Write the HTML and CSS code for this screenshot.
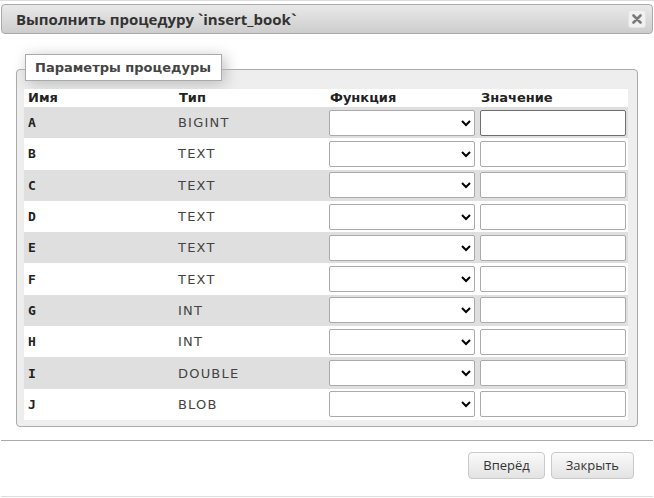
FILE: index.html
```html
<!DOCTYPE html>
<html lang="ru">
<head>
<meta charset="utf-8">
<title>Выполнить процедуру</title>
<link rel="stylesheet" href="styles.css">
</head>
<body>
<div class="dialog">
  <div class="titlebar">
    <span class="title">Выполнить процедуру `insert_book`</span>
    <button class="close" type="button" aria-label="Закрыть">
      <svg width="10" height="10" viewBox="0 0 10 10"><path d="M1.5 1.5 L8.5 8.5 M8.5 1.5 L1.5 8.5" stroke="#7a7a7a" stroke-width="2.6" stroke-linecap="round"/></svg>
    </button>
  </div>
  <div class="content">
    <div class="fieldset">
      <div class="legend">Параметры процедуры</div>
      <table class="params">
        <colgroup><col><col><col><col></colgroup>
        <thead>
          <tr><th>Имя</th><th>Тип</th><th>Функция</th><th>Значение</th></tr>
        </thead>
        <tbody>
          <tr class="odd"><td class="name">A</td><td class="type">BIGINT</td><td class="fn"><select><option></option></select></td><td class="val"><input type="text" class="focused"></td></tr>
          <tr><td class="name">B</td><td class="type">TEXT</td><td class="fn"><select><option></option></select></td><td class="val"><input type="text"></td></tr>
          <tr class="odd"><td class="name">C</td><td class="type">TEXT</td><td class="fn"><select><option></option></select></td><td class="val"><input type="text"></td></tr>
          <tr><td class="name">D</td><td class="type">TEXT</td><td class="fn"><select><option></option></select></td><td class="val"><input type="text"></td></tr>
          <tr class="odd"><td class="name">E</td><td class="type">TEXT</td><td class="fn"><select><option></option></select></td><td class="val"><input type="text"></td></tr>
          <tr><td class="name">F</td><td class="type">TEXT</td><td class="fn"><select><option></option></select></td><td class="val"><input type="text"></td></tr>
          <tr class="odd"><td class="name">G</td><td class="type">INT</td><td class="fn"><select><option></option></select></td><td class="val"><input type="text"></td></tr>
          <tr><td class="name">H</td><td class="type">INT</td><td class="fn"><select><option></option></select></td><td class="val"><input type="text"></td></tr>
          <tr class="odd"><td class="name">I</td><td class="type">DOUBLE</td><td class="fn"><select><option></option></select></td><td class="val"><input type="text"></td></tr>
          <tr><td class="name">J</td><td class="type">BLOB</td><td class="fn"><select><option></option></select></td><td class="val"><input type="text"></td></tr>
        </tbody>
      </table>
    </div>
  </div>
  <div class="buttonpane">
    <button class="btn" type="button">Вперёд</button>
    <button class="btn" type="button">Закрыть</button>
  </div>
</div>
</body>
</html>
```
FILE: styles.css
```css
* { box-sizing: border-box; }
html, body { margin: 0; padding: 0; background: #fff; }
body { font-family: "DejaVu Sans", sans-serif; color: #333; }

.dialog {
  width: 654px;
  height: 498px;
  border-top: 1px solid #dcdcdc;
  padding: 3px 1px 0;
  display: flex;
  flex-direction: column;
}

.titlebar {
  height: 30px;
  border: 1px solid #aaa;
  border-radius: 4px;
  background: linear-gradient(#e9e9e9, #cdcdcd);
  display: flex;
  align-items: center;
  justify-content: space-between;
  padding: 0 6px 0 14px;
}
.title {
  font-family: "Open Sans", sans-serif;
  font-weight: bold;
  font-size: 15px;
  color: #333;
}
.close {
  width: 18px;
  height: 18px;
  padding: 0;
  border: 1px solid #e4e4e4;
  border-radius: 3px;
  background: #f1f1f1;
  display: flex;
  align-items: center;
  justify-content: center;
}
.close svg { display: block; }

.content {
  padding: 35px 15px 13px;
}
.fieldset {
  border: 1px solid #aaa;
  border-radius: 4px;
  background: #eee;
  padding: 0 7px 6px;
}
.legend {
  width: max-content;
  margin: -16px 0 8px 1px;
  height: 27px;
  line-height: 25px;
  padding: 0 10px 0 9px;
  border: 1px solid #aaa;
  background: #fff;
  box-shadow: 3px 3px 15px #bbb;
  font-weight: bold;
  font-size: 13px;
  color: #444;
}

.params {
  width: 604px;
  border-collapse: collapse;
  table-layout: fixed;
}
.params col { width: 151px; }
.params th {
  height: 18px;
  padding: 0 4px;
  background: #fff;
  text-align: left;
  font-weight: bold;
  font-size: 13px;
  color: #222;
  line-height: 18px;
}
.params td {
  height: 31.3px;
  padding: 0 4px;
  background: #fff;
  font-size: 12px;
  vertical-align: middle;
}
.params tr.odd td { background: #dfdfdf; }
.params td.name {
  font-family: "DejaVu Sans Mono", monospace;
  font-weight: bold;
  font-size: 13px;
  color: #222;
}
.params td.type {
  color: #444;
  font-size: 13px;
  letter-spacing: 1.2px;
  padding-left: 3px;
}
.params td.fn, .params td.val { padding: 0 2px 0 3px; }

.params select, .params input {
  display: block;
  width: 146px;
  height: 26px;
  border: 1px solid #aaa;
  border-radius: 2px;
  background-color: #fff;
  font-size: 12px;
  margin: 0;
}
.params input { padding: 0 4px; }
.params input.focused { border-color: #6f6f6f; }

.buttonpane {
  border-top: 1px solid #aaa;
  border-bottom: 1px solid #dcdcdc;
  padding: 11px 19px 0 0;
  height: 57px;
  display: flex;
  justify-content: flex-end;
  align-items: flex-start;
  gap: 6px;
}
.btn {
  height: 27px;
  padding: 0 14px;
  border: 1px solid #c9c9c9;
  border-radius: 4px;
  background: linear-gradient(#fafafa, #e3e3e3);
  font-family: "Open Sans", sans-serif;
  font-size: 13px;
  color: #333;
}
```
